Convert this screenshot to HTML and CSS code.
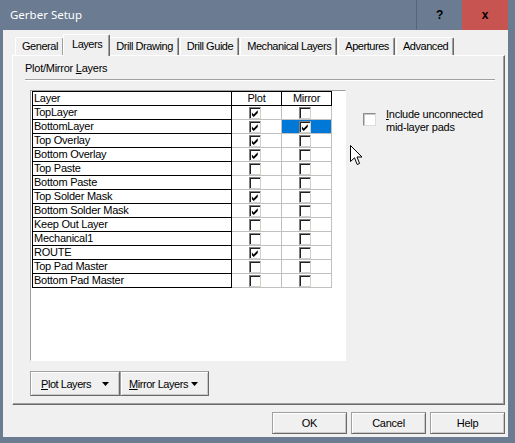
FILE: index.html
```html
<!DOCTYPE html>
<html>
<head>
<meta charset="utf-8">
<title>Gerber Setup</title>
<link rel="stylesheet" href="styles.css">
</head>
<body>
<div class="window">
  <div class="titlebar">
    <div class="title">Gerber Setup</div>
    <div class="tbtn help">?</div>
    <div class="tbtn close">x</div>
  </div>
  <div class="client">
    <div class="tabs">
      <div class="tab">General</div>
      <div class="tab active">Layers</div>
      <div class="tab">Drill Drawing</div>
      <div class="tab">Drill Guide</div>
      <div class="tab">Mechanical Layers</div>
      <div class="tab">Apertures</div>
      <div class="tab">Advanced</div>
    </div>
    <div class="panel">
      <div class="group-label">Plot/Mirror <u>L</u>ayers</div>
      <div class="separator"></div>
      <div class="content">
        <div class="gridbox">
          <div class="grid">
            <div class="hc lc">Layer</div><div class="hc cc">Plot</div><div class="hc cc">Mirror</div>

            <div class="lc">TopLayer</div>
            <div class="bc"><span class="cb"><svg viewBox="0 0 10 10"><polygon points="1,4 3,6 7.5,1.5 7.5,4.5 3,9 1,7"/></svg></span></div>
            <div class="bc"><span class="cb"></span></div>

            <div class="lc">BottomLayer</div>
            <div class="bc"><span class="cb"><svg viewBox="0 0 10 10"><polygon points="1,4 3,6 7.5,1.5 7.5,4.5 3,9 1,7"/></svg></span></div>
            <div class="bc sel"><span class="cb"><svg viewBox="0 0 10 10"><polygon points="1,4 3,6 7.5,1.5 7.5,4.5 3,9 1,7"/></svg></span></div>

            <div class="lc">Top Overlay</div>
            <div class="bc"><span class="cb"><svg viewBox="0 0 10 10"><polygon points="1,4 3,6 7.5,1.5 7.5,4.5 3,9 1,7"/></svg></span></div>
            <div class="bc"><span class="cb"></span></div>

            <div class="lc">Bottom Overlay</div>
            <div class="bc"><span class="cb"><svg viewBox="0 0 10 10"><polygon points="1,4 3,6 7.5,1.5 7.5,4.5 3,9 1,7"/></svg></span></div>
            <div class="bc"><span class="cb"></span></div>

            <div class="lc">Top Paste</div>
            <div class="bc"><span class="cb"></span></div>
            <div class="bc"><span class="cb"></span></div>

            <div class="lc">Bottom Paste</div>
            <div class="bc"><span class="cb"></span></div>
            <div class="bc"><span class="cb"></span></div>

            <div class="lc">Top Solder Mask</div>
            <div class="bc"><span class="cb"><svg viewBox="0 0 10 10"><polygon points="1,4 3,6 7.5,1.5 7.5,4.5 3,9 1,7"/></svg></span></div>
            <div class="bc"><span class="cb"></span></div>

            <div class="lc">Bottom Solder Mask</div>
            <div class="bc"><span class="cb"><svg viewBox="0 0 10 10"><polygon points="1,4 3,6 7.5,1.5 7.5,4.5 3,9 1,7"/></svg></span></div>
            <div class="bc"><span class="cb"></span></div>

            <div class="lc">Keep Out Layer</div>
            <div class="bc"><span class="cb"></span></div>
            <div class="bc"><span class="cb"></span></div>

            <div class="lc">Mechanical1</div>
            <div class="bc"><span class="cb"></span></div>
            <div class="bc"><span class="cb"></span></div>

            <div class="lc">ROUTE</div>
            <div class="bc"><span class="cb"><svg viewBox="0 0 10 10"><polygon points="1,4 3,6 7.5,1.5 7.5,4.5 3,9 1,7"/></svg></span></div>
            <div class="bc"><span class="cb"></span></div>

            <div class="lc">Top Pad Master</div>
            <div class="bc"><span class="cb"></span></div>
            <div class="bc"><span class="cb"></span></div>

            <div class="lc">Bottom Pad Master</div>
            <div class="bc"><span class="cb"></span></div>
            <div class="bc"><span class="cb"></span></div>
          </div>
        </div>
        <div class="option">
          <span class="opt-cb"></span>
          <span class="opt-text"><u>I</u>nclude unconnected<br>mid-layer pads</span>
        </div>
      </div>
      <div class="split-btns">
        <div class="sbtn plot"><span><u>P</u>lot Layers</span><svg class="tri" viewBox="0 0 7 4"><polygon points="0,0 7,0 3.5,4"/></svg></div>
        <div class="sbtn mirror"><span><u>M</u>irror Layers</span><svg class="tri" viewBox="0 0 7 4"><polygon points="0,0 7,0 3.5,4"/></svg></div>
      </div>
      <svg class="cursor" width="13" height="21" viewBox="0 0 13 21"><path d="M0.5,0.5 L0.5,16.5 L4.5,12.8 L7.2,19.5 L9.6,18.5 L7,12 L12,12 Z" fill="#fff" stroke="#000" stroke-width="1"/></svg>
    </div>
    <div class="dlg-btns">
      <div class="btn">OK</div>
      <div class="btn">Cancel</div>
      <div class="btn">Help</div>
    </div>
  </div>
</div>
</body>
</html>
```

FILE: styles.css
```css
* { box-sizing: border-box; }

html, body {
  margin: 0;
  padding: 0;
}

body {
  width: 515px;
  height: 443px;
  overflow: hidden;
  font-family: "Liberation Sans", Arial, sans-serif;
  font-size: 11px;
  letter-spacing: -0.25px;
  color: #000;
  background: #6b7b91;
}

.window {
  width: 515px;
  height: 443px;
  display: flex;
  flex-direction: column;
  background: #6b7b91;
  padding: 0 7px 6px 3px;
}

.titlebar {
  height: 30px;
  display: flex;
  align-items: stretch;
  flex-shrink: 0;
}

.title {
  flex: 1;
  padding-left: 7px;
  color: #fff;
  font-family: "Noto Sans", "Open Sans", sans-serif;
  font-size: 11.5px;
  letter-spacing: 0;
  line-height: 30px;
}

.tbtn {
  width: 46px;
  display: flex;
  align-items: center;
  justify-content: center;
  font-family: "Liberation Sans", Arial, sans-serif;
  font-weight: bold;
  font-size: 12px;
  color: #000;
}

.tbtn.help {
  border-left: 1px solid #56657a;
}

.tbtn.close {
  background: #c75450;
}

.client {
  flex: 1;
  background: #f0f0f0;
  display: flex;
  flex-direction: column;
  padding: 4px 3px 3px 9px;
}

.tabs {
  height: 21px;
  display: flex;
  align-items: flex-end;
  padding-left: 3px;
  flex-shrink: 0;
}

.tab {
  height: 18px;
  line-height: 17px;
  padding: 0 5px 0 6px;
  letter-spacing: -0.45px;
  border-top: 1px solid #fff;
  border-left: 1px solid #fff;
  border-right: 1px solid #696969;
  box-shadow: inset -1px 0 0 #a0a0a0;
  border-radius: 2px 2px 0 0;
  margin-right: 1px;
  white-space: nowrap;
}

.tab.active {
  height: 22px;
  line-height: 19px;
  margin: 0 -1px -1px -2px;
  padding: 0 7px 0 8px;
  background: #f0f0f0;
  position: relative;
  z-index: 1;
}

.panel {
  height: 350px;
  position: relative;
  border: 1px solid;
  border-color: #fff #696969 #696969 #fff;
  box-shadow: inset -1px -1px 0 #a0a0a0;
  padding: 6px 0 0 12px;
  flex-shrink: 0;
}

.group-label {
  line-height: 13px;
}

.separator {
  margin: 4px 9px 0 0;
  height: 2px;
  border-top: 1px solid #a0a0a0;
  border-bottom: 1px solid #fff;
}

.content {
  display: flex;
  margin: 9px 0 0 5px;
}

.gridbox {
  width: 316px;
  height: 271px;
  background: #fff;
  border: 1px solid;
  border-color: #a0a0a0 #fff #fff #a0a0a0;
  flex-shrink: 0;
}

.grid {
  display: grid;
  grid-template-columns: 200px 50px 50px;
  margin-left: 1px;
}

.grid > div {
  height: 14px;
  line-height: 13px;
  white-space: nowrap;
}

.lc {
  border-left: 1px solid #000;
  border-right: 1px solid #000;
  border-bottom: 1px solid #000;
  padding-left: 1px;
}

.hc {
  height: 15px !important;
  border-top: 1px solid #000;
  border-bottom: 1px solid #000;
  border-right: 1px solid #000;
}

.cc {
  text-align: center;
}

.bc {
  border-right: 1px solid #c0c0c0;
  border-bottom: 1px solid #c0c0c0;
  display: flex;
  align-items: center;
  padding-left: 17px;
}

.bc.sel {
  background: #0078d7;
}

.cb {
  width: 12px;
  height: 12px;
  background: #fff;
  border: 1px solid;
  border-color: #808080 #d4d0c8 #d4d0c8 #808080;
  box-shadow: inset 1px 1px 0 #202020;
  display: block;
  position: relative;
}

.cb svg {
  position: absolute;
  left: 1px;
  top: 1px;
  width: 9px;
  height: 9px;
  fill: #000;
}

.option {
  display: flex;
  margin: 18px 0 0 17px;
  align-items: flex-start;
}

.opt-cb {
  width: 13px;
  height: 13px;
  margin-top: 5px;
  background: #fff;
  border: 1px solid;
  border-color: #8c8c8c #dcdcdc #dcdcdc #8c8c8c;
  box-shadow: inset 1px 1px 0 #c8c8c8;
  flex-shrink: 0;
}

.opt-text {
  margin-left: 10px;
  line-height: 13px;
}

.split-btns {
  display: flex;
  margin: 10px 0 0 5px;
}

.sbtn {
  height: 25px;
  display: flex;
  align-items: center;
  justify-content: space-between;
  padding: 0 10px 0 10px;
  letter-spacing: -0.45px;
  background: #f0f0f0;
  border: 1px solid;
  border-color: #a0a0a0 #696969 #696969 #a0a0a0;
  box-shadow: inset 1px 1px 0 #fff, inset -1px -1px 0 #c8c8c8;
  white-space: nowrap;
}

.sbtn.plot {
  width: 90px;
}

.sbtn.mirror {
  width: 89px;
  padding-left: 8px;
}

.tri {
  width: 7px;
  height: 4px;
  fill: #000;
  flex-shrink: 0;
}

.cursor {
  position: absolute;
  left: 337px;
  top: 89px;
}

.dlg-btns {
  display: flex;
  justify-content: flex-end;
  gap: 4px;
  margin-top: 7px;
}

.btn {
  width: 75px;
  height: 22px;
  display: flex;
  align-items: center;
  justify-content: center;
  background: #f0f0f0;
  border: 1px solid;
  border-color: #a0a0a0 #696969 #696969 #a0a0a0;
  box-shadow: inset 1px 1px 0 #fff, inset -1px -1px 0 #c8c8c8;
}
```
